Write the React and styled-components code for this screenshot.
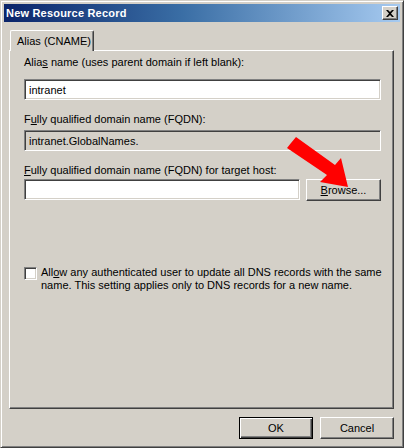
import React from 'react';
import styled, { createGlobalStyle } from 'styled-components';

const GlobalStyle = createGlobalStyle`
    html, body {
        margin: 0;
        padding: 0;
        background: #d4d0c8;
    }
    * {
        box-sizing: border-box;
    }
`

const Window = styled.div`
    position: relative;
    width: 404px;
    height: 448px;
    display: flex;
    flex-direction: column;
    padding: 3px;
    background: #d4d0c8;
    border-top: 1px solid #d4d0c8;
    border-left: 1px solid #d4d0c8;
    border-right: 1px solid #404040;
    border-bottom: 1px solid #404040;
    box-shadow: inset 1px 1px 0 #ffffff, inset -1px -1px 0 #808080;
    font-family: "Liberation Sans", Arial, sans-serif;
    font-size: 11px;
    color: #000;
`

const TitleBar = styled.div`
    height: 18px;
    display: flex;
    align-items: center;
    justify-content: space-between;
    padding: 0 2px 0 2px;
    background: linear-gradient(to right, #0a246a 0%, #3a6ea5 45%, #a6caf0 100%);
`

const Title = styled.span`
    color: #fff;
    font-weight: bold;
    font-size: 11px;
    letter-spacing: 0.2px;
`

const CloseButton = styled.div`
    width: 16px;
    height: 14px;
    display: flex;
    align-items: center;
    justify-content: center;
    background: #d4d0c8;
    border-top: 1px solid #fff;
    border-left: 1px solid #fff;
    border-right: 1px solid #404040;
    border-bottom: 1px solid #404040;
    box-shadow: inset -1px -1px 0 #808080;
`

const Body = styled.div`
    flex: 1;
    display: flex;
    flex-direction: column;
    padding: 8px 6px 0 5px;
`

const TabStrip = styled.div`
    display: flex;
    height: 20px;
    position: relative;
    z-index: 1;
`

const Tab = styled.div`
    width: 84px;
    height: 21px;
    padding-left: 6px;
    display: flex;
    align-items: center;
    background: #d4d0c8;
    border-top: 1px solid #fff;
    border-left: 1px solid #fff;
    border-right: 1px solid #404040;
    box-shadow: inset -1px 0 0 #808080;
    border-radius: 2px 2px 0 0;
    margin-left: 1px;
`

const TabPanel = styled.div`
    height: 359px;
    display: flex;
    flex-direction: column;
    padding: 5px 12px 0 14px;
    border-top: 1px solid #fff;
    border-left: 1px solid #fff;
    border-right: 1px solid #404040;
    border-bottom: 1px solid #404040;
    box-shadow: inset -1px -1px 0 #808080;
`

const Label = styled.div`
    height: 13px;
    line-height: 13px;
    white-space: nowrap;
    margin-bottom: ${p => p.gap || 10}px;
`

const Field = styled.div`
    height: 21px;
    display: flex;
    align-items: center;
    padding-left: 4px;
    background: ${p => (p.readOnly ? '#d4d0c8' : '#fff')};
    border-top: 1px solid #808080;
    border-left: 1px solid #808080;
    border-right: 1px solid #fff;
    border-bottom: 1px solid #fff;
    box-shadow: inset 1px 1px 0 #404040, inset -1px -1px 0 #d4d0c8;
    margin-bottom: 13px;
    flex: ${p => (p.grow ? 1 : 'none')};
`

const Row = styled.div`
    display: flex;
    gap: 6px;
`

const Button = styled.div`
    width: ${p => p.width || 74}px;
    height: ${p => p.height || 22}px;
    display: flex;
    align-items: center;
    justify-content: center;
    background: #d4d0c8;
    border: 1px solid;
    border-color: ${p => (p.primary ? '#000' : '#fff #404040 #404040 #fff')};
    box-shadow: ${p =>
        p.primary
            ? 'inset 1px 1px 0 #fff, inset -1px -1px 0 #404040, inset -2px -2px 0 #808080'
            : 'inset -1px -1px 0 #808080'};
`

const CheckRow = styled.label`
    display: flex;
    gap: 4px;
    margin-top: 53px;
`

const CheckBox = styled.span`
    width: 13px;
    height: 13px;
    flex: none;
    margin-top: 1px;
    background: #fff;
    border-top: 1px solid #808080;
    border-left: 1px solid #808080;
    border-right: 1px solid #fff;
    border-bottom: 1px solid #fff;
    box-shadow: inset 1px 1px 0 #404040, inset -1px -1px 0 #d4d0c8;
`

const CheckText = styled.span`
    line-height: 13px;
    white-space: nowrap;
`

const Footer = styled.div`
    display: flex;
    justify-content: flex-end;
    gap: 7px;
    padding: 8px 0 0 0;
`

const Arrow = styled.svg`
    position: absolute;
    left: 282px;
    top: 135px;
`

const U = styled.span`
    text-decoration: underline;
`

export default function App() {
    return (
        <>
            <GlobalStyle />
            <Window>
                <TitleBar>
                    <Title>New Resource Record</Title>
                    <CloseButton>
                        <svg width="8" height="7" viewBox="0 0 8 7">
                            <path d="M0 0h2l2 2 2-2h2L5 3.5 8 7H6L4 5 2 7H0l3-3.5z" fill="#000" />
                        </svg>
                    </CloseButton>
                </TitleBar>
                <Body>
                    <TabStrip>
                        <Tab>Alias (CNAME)</Tab>
                    </TabStrip>
                    <TabPanel>
                        <Label gap={10}>Alia<U>s</U> name (uses parent domain if left blank):</Label>
                        <Field>intranet</Field>
                        <Label gap={4}>F<U>u</U>lly qualified domain name (FQDN):</Label>
                        <Field readOnly>intranet.GlobalNames.</Field>
                        <Label gap={2}><U>F</U>ully qualified domain name (FQDN) for target host:</Label>
                        <Row>
                            <Field grow />
                            <Button width={75}><span><U>B</U>rowse...</span></Button>
                        </Row>
                        <CheckRow>
                            <CheckBox />
                            <CheckText>
                                All<U>o</U>w any authenticated user to update all DNS records with the same
                                <br />
                                name. This setting applies only to DNS records for a new name.
                            </CheckText>
                        </CheckRow>
                    </TabPanel>
                    <Footer>
                        <Button primary>OK</Button>
                        <Button>Cancel</Button>
                    </Footer>
                </Body>
                <Arrow width="80" height="60" viewBox="0 0 80 60">
                    <path d="M8 7 L13 1 L52 29 L58 22 L65 51 L37 46 L44 39 L4 12 Z" fill="#ff0000" />
                </Arrow>
            </Window>
        </>
    );
}
